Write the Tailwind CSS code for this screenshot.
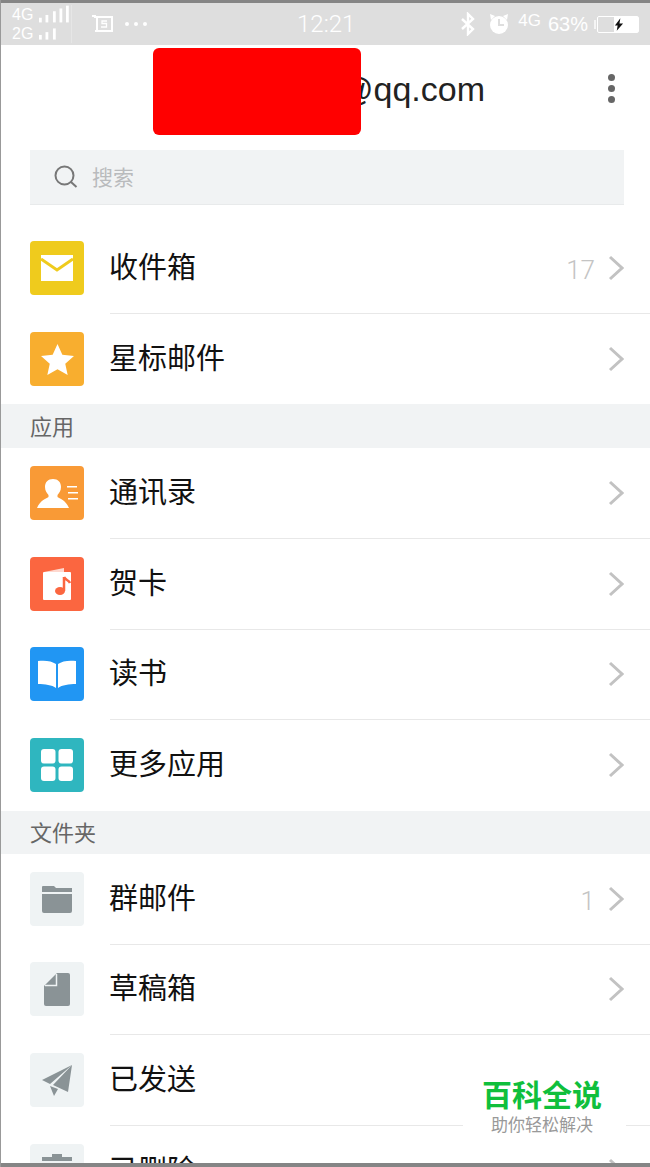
<!DOCTYPE html>
<html lang="zh">
<head>
  <title>邮箱</title>
  <script src="https://cdn.jsdelivr.net/npm/@tailwindcss/browser@4"></script>
</head>
<body class="bg-white">
  <div class="relative w-[650px] h-[1167px] overflow-hidden bg-white border-l border-[#999] font-['Liberation_Sans','Noto_Sans_CJK_SC',sans-serif]">

    <!-- Status bar -->
    <div class="h-[3px] bg-[#858585] -ml-px"></div>
    <div class="h-[42px] bg-[#dedede] text-white flex items-center -ml-px">
      <div class="w-[72px] pl-[12px] text-[16px] leading-[19px] border-r border-[#e6e6e6]">
        <div class="flex items-center gap-[6px]">
          <span>4G</span>
          <svg width="34" height="19" viewBox="0 0 34 19" fill="#fff"><rect x="0" y="13" width="3" height="5"/><rect x="7" y="10" width="3" height="8"/><rect x="15" y="6" width="3" height="12"/><rect x="22" y="3" width="3" height="15"/><rect x="29" y="0" width="3" height="18"/></svg>
        </div>
        <div class="flex items-center gap-[6px]">
          <span>2G</span>
          <svg width="34" height="16" viewBox="0 0 34 16" fill="#fff"><rect x="0" y="9" width="3" height="5"/><rect x="7" y="6" width="3" height="8"/><rect x="15" y="2" width="3" height="12"/></svg>
        </div>
      </div>
      <svg class="ml-[19px]" width="24" height="22" viewBox="0 0 24 22" fill="none" stroke="#fff" stroke-width="2"><path d="M1 3h3v1h17v14H6V4"/><path d="M4 18h18"/><path d="M16 8h-5v2.500h4.500V14H10" stroke-width="1.300"/></svg>
      <div class="ml-[10px] flex gap-[5px]">
        <span class="w-[4px] h-[4px] rounded-full bg-white"></span>
        <span class="w-[4px] h-[4px] rounded-full bg-white"></span>
        <span class="w-[4px] h-[4px] rounded-full bg-white"></span>
      </div>
      <span class="ml-[150px] text-[24px] font-['Roboto'] font-light">12:21</span>
      <svg class="ml-[106px]" width="14" height="24" viewBox="0 0 14 24" fill="none" stroke="#fff" stroke-width="2.400"><path d="M1 7l11 10-5 5V2l5 5L1 17"/></svg>
      <svg class="ml-[12px]" width="24" height="24" viewBox="0 0 24 24"><path d="M3 2l5 2-4 4zM21 2l-5 2 4 4z" fill="#fff"/><circle cx="12" cy="13" r="9" fill="#fff"/><path d="M12 7v6h5" fill="none" stroke="#dedede" stroke-width="2"/></svg>
      <span class="ml-[7px] -mt-[6px] text-[17px]">4G</span>
      <span class="ml-[7px] text-[20px]">63%</span>
      <div class="ml-[9px] relative w-[42px] h-[17px] border border-white rounded-[2px] flex">
        <div class="absolute -left-[4px] top-[3px] w-[2px] h-[9px] bg-white/70"></div>
        <div class="w-[16px]"></div>
        <div class="flex-1 bg-white"></div>
        <svg class="absolute left-[16px] top-[1px]" width="10" height="13" viewBox="0 0 11 14" fill="#111"><path d="M7 0L1 8h3l-1 6 7-8H6z"/></svg>
      </div>
    </div>

    <!-- Account header -->
    <div class="h-[105px] flex items-center justify-end relative">
      <span class="text-[34px] text-[#222] font-['Liberation_Sans'] mr-[165px] -mt-[16px]">@qq.com</span>
      <div class="absolute left-[607px] top-[29px] flex flex-col gap-[4px]">
        <span class="w-[7px] h-[7px] rounded-full bg-[#666]"></span>
        <span class="w-[7px] h-[7px] rounded-full bg-[#666]"></span>
        <span class="w-[7px] h-[7px] rounded-full bg-[#666]"></span>
      </div>
      <!-- red block covering the address -->
      <div class="absolute left-[152px] top-[3px] w-[208px] h-[87px] bg-[#ff0000] rounded-[6px]"></div>
    </div>

    <!-- Search -->
    <div class="ml-[29px] w-[594px] h-[55px] bg-[#f1f3f4] border-b border-[#e8eaeb] flex items-center">
      <svg class="ml-[24px]" width="24" height="24" viewBox="0 0 24 24" fill="none" stroke="#777" stroke-width="2"><circle cx="10.500" cy="10.500" r="9"/><path d="M17 17l5.500 5"/></svg>
      <span class="ml-[14px] mt-[2px] text-[21px] text-[#b9bbbd]">搜索</span>
    </div>

    <div class="h-[18px]"></div>

    <!-- 收件箱 -->
    <div class="h-[90px] flex items-center">
      <div class="ml-[29px] w-[54px] h-[54px] rounded-[4px] bg-[#efcb1d] flex items-center justify-center">
        <svg width="32" height="26" viewBox="0 0 32 26"><path d="M0 0h32v26H0z" fill="#fff"/><path d="M0 4l16 11L32 4" fill="none" stroke="#efcb1d" stroke-width="3"/></svg>
      </div>
      <span class="ml-[25px] mt-[2px] text-[29px] text-[#111]">收件箱</span>
      <span class="ml-auto mt-[4px] text-[26px] text-[#c4c4c4] font-['Roboto'] font-light">17</span>
      <svg class="ml-[13px] mr-[26px]" width="16" height="26" viewBox="0 0 16 26" fill="none" stroke="#c2c2c2" stroke-width="3"><path d="M2 2l12 11L2 24"/></svg>
    </div>
    <div class="ml-[109px] h-px bg-[#e8e8e8]"></div>

    <!-- 星标邮件 -->
    <div class="h-[90px] flex items-center">
      <div class="ml-[29px] w-[54px] h-[54px] rounded-[4px] bg-[#f8ae2f] flex items-center justify-center">
        <svg width="33" height="31" viewBox="0 0 34 32" fill="#fff"><path d="M17 0l5 11 12 1.500-9 8 2.500 11.500L17 26 6.500 32 9 20.500l-9-8L12 11z"/></svg>
      </div>
      <span class="ml-[25px] mt-[2px] text-[29px] text-[#111]">星标邮件</span>
      <svg class="ml-auto mr-[26px]" width="16" height="26" viewBox="0 0 16 26" fill="none" stroke="#c2c2c2" stroke-width="3"><path d="M2 2l12 11L2 24"/></svg>
    </div>

    <!-- 应用 -->
    <div class="h-[44px] bg-[#f1f3f4] flex items-center pl-[29px] pt-[2px] text-[22px] text-[#666]">应用</div>

    <div class="h-[90px] flex items-center">
      <div class="ml-[29px] w-[54px] h-[54px] rounded-[4px] bg-[#f99a36] flex items-center justify-center">
        <svg width="41" height="29" viewBox="0 0 41 29" fill="#fff"><path d="M16 0c5 0 8 3 8 8 0 4-2 6-3.500 8v2c3 2 8 3 11.500 11H0c3.500-8 8.500-9 11.500-11v-2C10 14 8 12 8 8c0-5 3-8 8-8z"/><rect x="30" y="7" width="10" height="1.500"/><rect x="31" y="13" width="10" height="1.500"/><rect x="31" y="19" width="10" height="1.500"/></svg>
      </div>
      <span class="ml-[25px] mt-[2px] text-[29px] text-[#111]">通讯录</span>
      <svg class="ml-auto mr-[26px]" width="16" height="26" viewBox="0 0 16 26" fill="none" stroke="#c2c2c2" stroke-width="3"><path d="M2 2l12 11L2 24"/></svg>
    </div>
    <div class="ml-[109px] h-px bg-[#e8e8e8]"></div>

    <div class="h-[90px] flex items-center">
      <div class="ml-[29px] w-[54px] h-[54px] rounded-[4px] bg-[#fb6640] flex items-center justify-center">
        <svg width="30" height="32" viewBox="0 0 30 32"><path d="M2 4L22 0v4z" fill="#fff" opacity=".75"/><rect x="1" y="4" width="28" height="28" rx="1" fill="#fff"/><path d="M22 9v14" stroke="#fb6640" stroke-width="2.500"/><path d="M22 9c1 3 5 3 6 6" fill="none" stroke="#fb6640" stroke-width="2.500"/><ellipse cx="18" cy="23" rx="5" ry="4" fill="#fb6640"/></svg>
      </div>
      <span class="ml-[25px] mt-[2px] text-[29px] text-[#111]">贺卡</span>
      <svg class="ml-auto mr-[26px]" width="16" height="26" viewBox="0 0 16 26" fill="none" stroke="#c2c2c2" stroke-width="3"><path d="M2 2l12 11L2 24"/></svg>
    </div>
    <div class="ml-[109px] h-px bg-[#e8e8e8]"></div>

    <div class="h-[89px] pb-[1px] flex items-center">
      <div class="ml-[29px] w-[54px] h-[54px] rounded-[4px] bg-[#2196f3] flex items-center justify-center">
        <svg width="40" height="28" viewBox="0 0 40 28" fill="#fff"><path d="M1 1c7-1 14 0 18 3v24c-4-3-11-4-18-4zM39 1c-7-1-14 0-18 3v24c4-3 11-4 18-4z"/></svg>
      </div>
      <span class="ml-[25px] mt-[2px] text-[29px] text-[#111]">读书</span>
      <svg class="ml-auto mr-[26px]" width="16" height="26" viewBox="0 0 16 26" fill="none" stroke="#c2c2c2" stroke-width="3"><path d="M2 2l12 11L2 24"/></svg>
    </div>
    <div class="ml-[109px] h-px bg-[#e8e8e8]"></div>

    <div class="h-[91px] pb-[1px] flex items-center">
      <div class="ml-[29px] w-[54px] h-[54px] rounded-[4px] bg-[#2fb6bf] flex items-center justify-center">
        <svg width="32" height="32" viewBox="0 0 32 32" fill="#fff"><rect width="14.500" height="14.500" rx="3"/><rect x="17.500" width="14.500" height="14.500" rx="3"/><rect y="17.500" width="14.500" height="14.500" rx="3"/><rect x="17.500" y="17.500" width="14.500" height="14.500" rx="3"/></svg>
      </div>
      <span class="ml-[25px] mt-[2px] text-[29px] text-[#111]">更多应用</span>
      <svg class="ml-auto mr-[26px]" width="16" height="26" viewBox="0 0 16 26" fill="none" stroke="#c2c2c2" stroke-width="3"><path d="M2 2l12 11L2 24"/></svg>
    </div>

    <!-- 文件夹 -->
    <div class="h-[43px] bg-[#f1f3f4] flex items-center pl-[29px] pt-[2px] text-[22px] text-[#666]">文件夹</div>

    <div class="h-[90px] flex items-center">
      <div class="ml-[29px] w-[54px] h-[54px] rounded-[4px] bg-[#eff3f4] flex items-center justify-center">
        <svg width="30" height="28" viewBox="0 0 30 28" fill="#8a9396"><path d="M0 2a1 1 0 011-1h11l2 2h16v4H0zM0 9h30v17a2 2 0 01-2 2H2a2 2 0 01-2-2z"/></svg>
      </div>
      <span class="ml-[25px] mt-[2px] text-[29px] text-[#111]">群邮件</span>
      <span class="ml-auto mt-[4px] text-[26px] text-[#c4c4c4] font-['Roboto'] font-light">1</span>
      <svg class="ml-[13px] mr-[26px]" width="16" height="26" viewBox="0 0 16 26" fill="none" stroke="#c2c2c2" stroke-width="3"><path d="M2 2l12 11L2 24"/></svg>
    </div>
    <div class="ml-[109px] h-px bg-[#e8e8e8]"></div>

    <div class="h-[89px] pb-[1px] flex items-center">
      <div class="ml-[29px] w-[54px] h-[54px] rounded-[4px] bg-[#eff3f4] flex items-center justify-center">
        <svg width="26" height="33" viewBox="0 0 26 33" fill="#8a9396"><path d="M13 0h11a2 2 0 012 2v29a2 2 0 01-2 2H2a2 2 0 01-2-2V13z"/><path d="M1 12.500h11.500V1" fill="none" stroke="#eff3f4" stroke-width="1.500"/></svg>
      </div>
      <span class="ml-[25px] mt-[2px] text-[29px] text-[#111]">草稿箱</span>
      <svg class="ml-auto mr-[26px]" width="16" height="26" viewBox="0 0 16 26" fill="none" stroke="#c2c2c2" stroke-width="3"><path d="M2 2l12 11L2 24"/></svg>
    </div>
    <div class="ml-[109px] h-px bg-[#e8e8e8]"></div>

    <div class="h-[90px] flex items-center">
      <div class="ml-[29px] w-[54px] h-[54px] rounded-[4px] bg-[#eff3f4] flex items-center justify-center">
        <svg width="31" height="31" viewBox="0 0 31 31" fill="#8a9396"><path d="M30 0L0 15l8 4zM30 0L11 20l15 7zM8 21l4 10 4-7z"/></svg>
      </div>
      <span class="ml-[25px] mt-[2px] text-[29px] text-[#111]">已发送</span>
    </div>
    <div class="ml-[109px] h-px bg-[#e8e8e8]"></div>

    <div class="h-[90px] flex items-center">
      <div class="ml-[29px] w-[54px] h-[54px] rounded-[4px] bg-[#eff3f4] flex justify-center pt-[10px]">
        <svg width="30" height="30" viewBox="0 0 30 30" fill="#8a9396"><path d="M10 0h10v3h10v4H0V3h10zM3 9h24v21H3z"/></svg>
      </div>
      <span class="ml-[25px] mt-[2px] text-[29px] text-[#111]">已删除</span>
      <svg class="ml-auto mr-[26px]" width="16" height="26" viewBox="0 0 16 26" fill="none" stroke="#c2c2c2" stroke-width="3"><path d="M2 2l12 11L2 24"/></svg>
    </div>

    <!-- Watermark -->
    <div class="absolute left-[462px] top-[1072px] w-[163px] h-[70px] bg-white flex flex-col items-center pt-[7px] pr-[5px]">
      <span class="text-[30px] leading-[34px] font-bold text-[#0fbf3c]">百科全说</span>
      <span class="text-[17px] leading-[26px] text-[#999]">助你轻松解决</span>
    </div>

    <!-- Bottom edge -->
    <div class="absolute left-0 right-0 bottom-0 h-[4px] bg-[#858585] -ml-px"></div>
  </div>
</body>
</html>
